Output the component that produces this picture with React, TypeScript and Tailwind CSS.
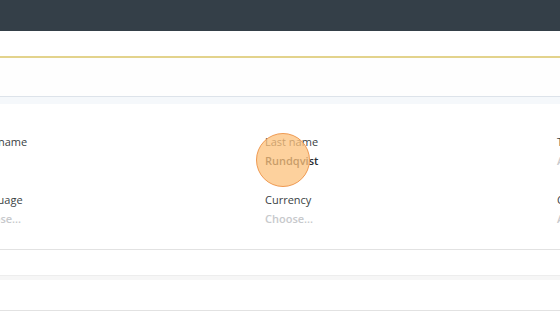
import React from "react";

function Field({ label, value, strong }: { label: string; value: string; strong?: boolean }) {
  return (
    <div className="flex w-[292px] shrink-0 flex-col">
      <div className="h-[19px] text-[11px] leading-[19px] text-[#3a3f44]">{label}</div>
      <div
        className={
          strong
            ? "h-[19px] text-[11px] font-semibold leading-[19px] text-[#2a2f33]"
            : "h-[19px] text-[11px] font-semibold leading-[19px] text-[#c7c9cc]"
        }
      >
        {value}
      </div>
    </div>
  );
}

export default function App() {
  return (
    <div
      className="relative h-[315px] w-[560px] overflow-hidden bg-white"
      style={{ fontFamily: '"Open Sans", "Noto Sans", sans-serif' }}
    >
      <div className="h-[31px] bg-[#343f48]" />
      <div className="h-[25px] bg-white" />
      <div className="h-[2px] bg-[#e3d38c]" />
      <div className="h-[38px] bg-[#fefefe]" />
      <div className="h-px bg-[#dde3ea]" />
      <div className="h-[7px] bg-[#f5f8fb]" />
      <div className="flex flex-col gap-[20px] pt-[28px] pl-0">
        <div className="ml-[-27px] flex">
          <Field label="First name" value="Eva" />
          <Field label="Last name" value="Rundqvist" strong />
          <Field label="Title" value="Add..." />
        </div>
        <div className="ml-[-27px] flex">
          <Field label="Language" value="Choose..." />
          <Field label="Currency" value="Choose..." />
          <Field label="Country" value="Add..." />
        </div>
      </div>
      <div className="absolute left-0 right-0 top-[249px] h-px bg-[#e2e2e2]" />
      <div className="absolute left-0 right-0 top-[275px] h-[5px] bg-[#f6f6f6] border-t border-[#ededed]" />
      <div className="absolute left-0 right-0 top-[310px] h-px bg-[#e2e2e2]" />
      <div className="absolute left-[256px] top-[133px] h-[54px] w-[54px] rounded-full border border-[#ef9a52] bg-[#fcc27c]/75" />
    </div>
  );
}
